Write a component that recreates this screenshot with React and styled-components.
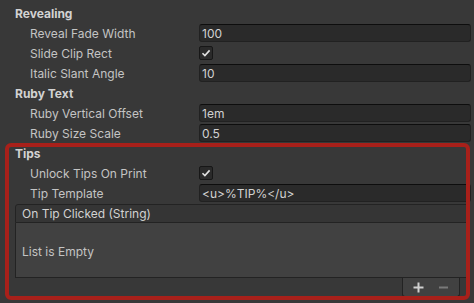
import styled, { createGlobalStyle } from "styled-components";

const GlobalStyle = createGlobalStyle`
body {
  margin: 0;
  background: #383838;
  font-family: Inter, "Noto Sans", sans-serif;
  font-size: 12px;
  color: #c4c4c4;
}
`;

const Panel = styled.div`
width: 474px;
height: 303px;
padding-top: 3px;
box-sizing: border-box;
overflow: hidden;
`;

const SectionHeader = styled.div`
height: 20px;
display: flex;
align-items: center;
padding-left: 15px;
font-weight: 700;
color: #d2d2d2;
`;

const Row = styled.div`
height: 20px;
display: flex;
align-items: center;
`;

const Label = styled.div`
width: 199px;
padding-left: 30px;
box-sizing: border-box;
flex-shrink: 0;
`;

const Field = styled.div`
flex: 1;
height: 18px;
margin-right: 3px;
box-sizing: border-box;
background: #2a2a2a;
border: 1px solid #212121;
border-top-color: #0d0d0d;
border-radius: 3px;
padding-left: 2px;
display: flex;
align-items: center;
color: #d2d2d2;
`;

const Check = styled.div`
width: 14px;
height: 14px;
box-sizing: border-box;
background: #2a2a2a;
border: 1px solid #171717;
border-radius: 2px;
display: flex;
align-items: center;
justify-content: center;
`;

const Highlight = styled.div`
position: relative;
padding-bottom: 4px;

&::after {
  content: "";
  position: absolute;
  top: 0;
  left: 5px;
  right: 4px;
  bottom: 1px;
  border: 4px solid #a8201a;
  border-radius: 6px;
  pointer-events: none;
}
`;

const List = styled.div`
margin: 1px 4px 0 15px;
`;

const ListHeader = styled.div`
height: 19px;
box-sizing: border-box;
background: #353535;
border: 1px solid #232323;
border-radius: 3px 3px 0 0;
padding-left: 6px;
display: flex;
align-items: center;
color: #d2d2d2;
`;

const ListBody = styled.div`
height: 55px;
box-sizing: border-box;
background: #414141;
border: 1px solid #232323;
border-top: none;
padding: 3px 0 0 6px;
display: flex;
align-items: center;
color: #c4c4c4;
`;

const Footer = styled.div`
display: flex;
justify-content: flex-end;
padding-right: 10px;
`;

const FooterTab = styled.div`
width: 58px;
height: 19px;
box-sizing: border-box;
background: #414141;
border: 1px solid #232323;
border-top: none;
border-radius: 0 0 3px 3px;
padding-left: 10px;
display: flex;
align-items: center;
gap: 14px;
`;

const Plus = () => (
  <svg width="11" height="11" viewBox="0 0 11 11">
    <path d="M5.5 0.5v10M0.5 5.5h10" stroke="#d0d0d0" strokeWidth="2" />
  </svg>
);

const Minus = () => (
  <svg width="11" height="11" viewBox="0 0 11 11">
    <path d="M1 5.5h9" stroke="#7a7a7a" strokeWidth="2" />
  </svg>
);

const Tick = () => (
  <svg width="10" height="10" viewBox="0 0 10 10">
    <path d="M1.5 5.2l2.4 2.4L8.6 2.4" fill="none" stroke="#e0e0e0" strokeWidth="1.6" />
  </svg>
);

const App = () => {
  return (
    <Panel>
      <GlobalStyle />
      <SectionHeader>Revealing</SectionHeader>
      <Row><Label>Reveal Fade Width</Label><Field>100</Field></Row>
      <Row><Label>Slide Clip Rect</Label><Check><Tick /></Check></Row>
      <Row><Label>Italic Slant Angle</Label><Field>10</Field></Row>
      <SectionHeader>Ruby Text</SectionHeader>
      <Row><Label>Ruby Vertical Offset</Label><Field>1em</Field></Row>
      <Row><Label>Ruby Size Scale</Label><Field>0.5</Field></Row>
      <Highlight>
        <SectionHeader>Tips</SectionHeader>
        <Row><Label>Unlock Tips On Print</Label><Check><Tick /></Check></Row>
        <Row><Label>Tip Template</Label><Field>{"<u>%TIP%</u>"}</Field></Row>
        <List>
          <ListHeader>On Tip Clicked (String)</ListHeader>
          <ListBody>List is Empty</ListBody>
          <Footer>
            <FooterTab><Plus /><Minus /></FooterTab>
          </Footer>
        </List>
      </Highlight>
    </Panel>
  );
};

export default App;
